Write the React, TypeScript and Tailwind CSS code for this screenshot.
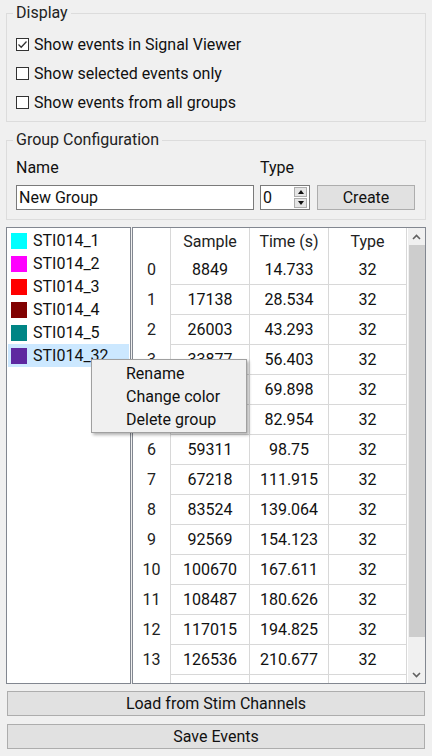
import React from "react";

const FONT = "font-['Roboto','Noto_Sans',sans-serif]";

const groups = [
  { name: "STI014_1", color: "bg-[#00ffff]" },
  { name: "STI014_2", color: "bg-[#ff00ff]" },
  { name: "STI014_3", color: "bg-[#ff0000]" },
  { name: "STI014_4", color: "bg-[#800000]" },
  { name: "STI014_5", color: "bg-[#008585]" },
  { name: "STI014_32", color: "bg-[#5e28a0]" },
];

const events = [
  ["8849", "14.733"],
  ["17138", "28.534"],
  ["26003", "43.293"],
  ["33877", "56.403"],
  ["41982", "69.898"],
  ["49823", "82.954"],
  ["59311", "98.75"],
  ["67218", "111.915"],
  ["83524", "139.064"],
  ["92569", "154.123"],
  ["100670", "167.611"],
  ["108487", "180.626"],
  ["117015", "194.825"],
  ["126536", "210.677"],
];

function Check({ label, checked }: { label: string; checked?: boolean }) {
  return (
    <div className="flex h-[29px] items-center">
      <span className="flex h-[13px] w-[13px] items-center justify-center border border-[#333] bg-white">
        {checked && (
          <svg width="11" height="11" viewBox="0 0 11 11">
            <path d="M1.5 5.5 L4.2 8.2 L9.5 2.5" fill="none" stroke="#333" strokeWidth="1.3" />
          </svg>
        )}
      </span>
      <span className="ml-[5px]">{label}</span>
    </div>
  );
}

function Chevron({ up }: { up?: boolean }) {
  return (
    <svg width="9" height="6" viewBox="0 0 9 6">
      <path
        d={up ? "M1 5 L4.5 1.5 L8 5" : "M1 1 L4.5 4.5 L8 1"}
        fill="none"
        stroke="#606060"
        strokeWidth="1.6"
      />
    </svg>
  );
}

export default function App() {
  return (
    <div className={`${FONT} relative h-[756px] w-[432px] overflow-hidden bg-[#f0f0f0] px-[6px] pt-[4px] text-[16px] leading-[18px] text-[#111]`}>
      {/* Display */}
      <fieldset className="border border-[#dcdcdc] px-[9px] pb-[4px]">
        <legend className="-ml-[3px] px-[3px] text-[#222]">Display</legend>
        <div className="pt-[8px]">
          <Check label="Show events in Signal Viewer" checked />
          <Check label="Show selected events only" />
          <Check label="Show events from all groups" />
        </div>
      </fieldset>

      {/* Group configuration */}
      <fieldset className="mt-[9px] border border-[#dcdcdc] px-[9px] pb-[9px]">
        <legend className="-ml-[3px] px-[3px] text-[#222]">Group Configuration</legend>
        <div className="mt-[10px] flex">
          <span className="w-[238px]">Name</span>
          <span className="ml-[6px]">Type</span>
        </div>
        <div className="mt-[8px] flex h-[25px]">
          <div className="flex w-[238px] items-center border border-[#7a7a7a] bg-white pl-[2px]">New Group</div>
          <div className="ml-[6px] flex w-[50px] items-center border border-[#7a7a7a] bg-white pl-[2px]">
            <span className="flex-1">0</span>
            <div className="mr-[2px] flex flex-col gap-[1px]">
              <span className="flex h-[10px] w-[13px] items-center justify-center border border-[#adadad] bg-[#e5e5e5]">
                <svg width="6" height="4" viewBox="0 0 6 4"><path d="M0 4 L3 0 L6 4 Z" fill="#111" /></svg>
              </span>
              <span className="flex h-[10px] w-[13px] items-center justify-center border border-[#adadad] bg-[#e5e5e5]">
                <svg width="6" height="4" viewBox="0 0 6 4"><path d="M0 0 L3 4 L6 0 Z" fill="#111" /></svg>
              </span>
            </div>
          </div>
          <button className="ml-[7px] w-[98px] border border-[#adadad] bg-[#e1e1e1]">Create</button>
        </div>
      </fieldset>

      {/* Lists */}
      <div className="mt-[7px] flex h-[457px]">
        <div className="w-[125px] border border-[#828790] bg-white px-[1px] pt-[1px]">
          {groups.map((g, i) => (
            <div
              key={g.name}
              className={`flex h-[23px] items-center pl-[3px] ${i === 5 ? "bg-[#cce8ff]" : ""}`}
            >
              <span className={`h-[16px] w-[16px] ${g.color}`} />
              <span className="ml-[6px]">{g.name}</span>
            </div>
          ))}
        </div>

        <div className="ml-[1px] flex w-[294px] overflow-hidden border border-[#828790] bg-white">
          <div className="w-[275px] overflow-hidden">
            <div className="flex h-[27px] items-center text-[#222]">
              <span className="h-full w-[38px] border-r border-[#d8d8d8]" />
              <span className="flex h-full w-[79px] items-center justify-center border-r border-[#d8d8d8]">Sample</span>
              <span className="flex h-full w-[79px] items-center justify-center border-r border-[#d8d8d8]">Time (s)</span>
              <span className="flex h-full w-[78px] items-center justify-center border-r border-[#d8d8d8]">Type</span>
            </div>
            {events.map(([s, t], i) => (
              <div key={i} className="flex h-[30px]">
                <span className="flex w-[38px] items-center justify-center border-r border-[#d8d8d8] text-[#222]">{i}</span>
                <span className="flex w-[79px] items-center justify-center border-r border-b border-[#d8d8d8]">{s}</span>
                <span className="flex w-[79px] items-center justify-center border-r border-b border-[#d8d8d8]">{t}</span>
                <span className="flex w-[78px] items-center justify-center border-r border-b border-[#d8d8d8]">32</span>
              </div>
            ))}
            <div className="flex h-[30px]">
              <span className="w-[38px] border-r border-[#d8d8d8]" />
              <span className="w-[79px] border-r border-[#d8d8d8]" />
              <span className="w-[79px] border-r border-[#d8d8d8]" />
              <span className="w-[78px] border-r border-[#d8d8d8]" />
            </div>
          </div>
          <div className="flex w-[17px] flex-col bg-[#f0f0f0]">
            <div className="flex h-[17px] items-center justify-center">
              <Chevron up />
            </div>
            <div className="ml-[1px] h-[392px] bg-[#cdcdcd]" />
            <div className="flex-1" />
            <div className="flex h-[17px] items-center justify-center">
              <Chevron />
            </div>
          </div>
        </div>
      </div>

      {/* Buttons */}
      <div className="mt-[7px] flex flex-col gap-[8px] px-[1px]">
        <button className="h-[25px] border border-[#adadad] bg-[#e1e1e1]">Load from Stim Channels</button>
        <button className="h-[25px] border border-[#adadad] bg-[#e1e1e1]">Save Events</button>
      </div>

      {/* Context menu */}
      <div className="absolute left-[91px] top-[359px] w-[156px] border border-[#a0a0a0] bg-[#f0f0f0] pt-[2px] pb-[1px] shadow-[2px_2px_3px_rgba(0,0,0,0.3)]">
        {["Rename", "Change color", "Delete group"].map((m) => (
          <div key={m} className="flex h-[23px] items-center pl-[34px]">
            {m}
          </div>
        ))}
      </div>
    </div>
  );
}
